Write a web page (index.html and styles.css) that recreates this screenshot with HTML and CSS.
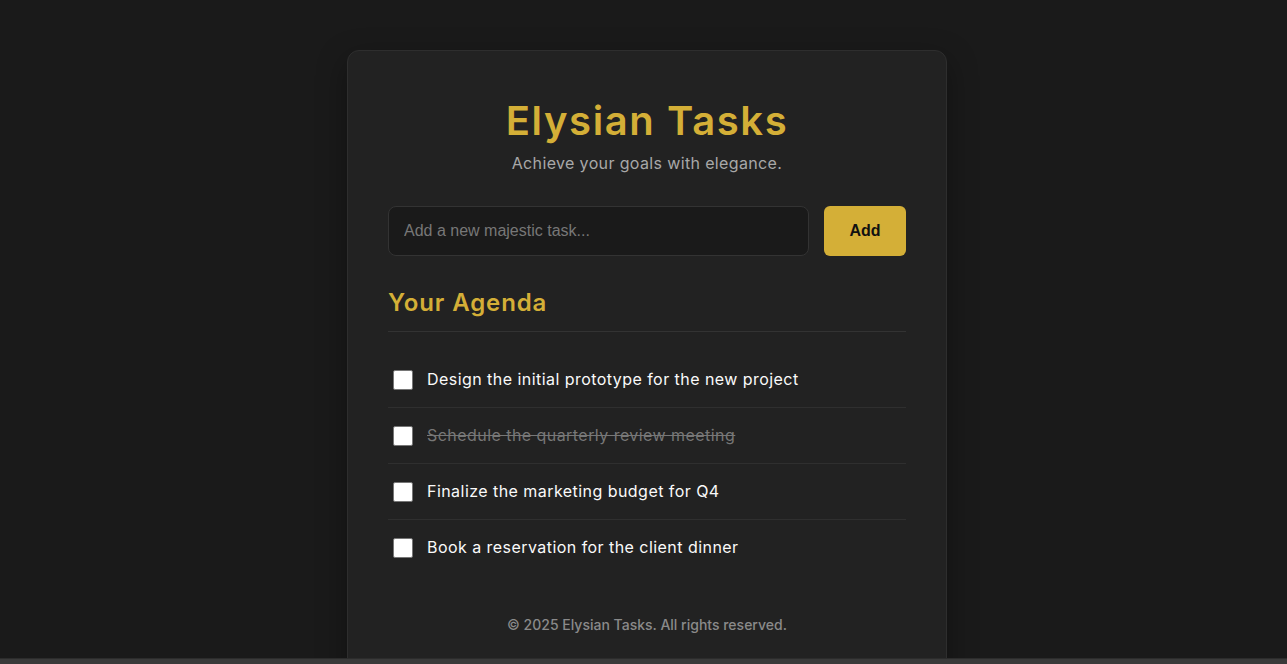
FILE: index.html
```html
<!DOCTYPE html>
<html lang="en">
<head>
<meta charset="utf-8">
<title>Elysian Tasks</title>
<link rel="stylesheet" href="styles.css">
</head>
<body>
<main class="card">
  <header class="header">
    <h1 class="title">Elysian Tasks</h1>
    <p class="subtitle">Achieve your goals with elegance.</p>
  </header>
  <form class="add-form">
    <input class="task-input" type="text" placeholder="Add a new majestic task...">
    <button class="add-btn" type="button">Add</button>
  </form>
  <h2 class="agenda">Your Agenda</h2>
  <ul class="tasks">
    <li class="task"><span class="check"></span><span class="task-text">Design the initial prototype for the new project</span></li>
    <li class="task done"><span class="check"></span><span class="task-text">Schedule the quarterly review meeting</span></li>
    <li class="task"><span class="check"></span><span class="task-text">Finalize the marketing budget for Q4</span></li>
    <li class="task"><span class="check"></span><span class="task-text">Book a reservation for the client dinner</span></li>
  </ul>
  <footer class="footer">© 2025 Elysian Tasks. All rights reserved.</footer>
</main>
<div class="scrollbar"></div>
</body>
</html>
```
FILE: styles.css
```css
* { box-sizing: border-box; }
html, body { margin: 0; padding: 0; }
body {
  background: #1a1a1a;
  font-family: Inter, "Noto Sans", sans-serif;
  color: #f0f0f0;
  padding: 50px 0 0 7px;
}
.card {
  width: 600px;
  margin: 0 auto;
  background: #222222;
  border: 1px solid #2e2e2e;
  border-radius: 12px;
  box-shadow: 0 10px 30px rgba(0,0,0,0.35);
  padding: 46px 40px 40px;
}
.header { text-align: center; margin-bottom: 31px; }
.title {
  margin: 0;
  font-size: 40px;
  line-height: 48px;
  font-weight: 600;
  color: #d4af37;
  letter-spacing: 1.6px;
}
.subtitle {
  margin: 6px 0 0;
  font-size: 16px;
  line-height: 24px;
  color: #a8a8a8;
  letter-spacing: 0.36px;
}
.add-form { display: flex; gap: 15px; margin: 0; }
.task-input {
  flex: 1;
  height: 50px;
  background: #1a1a1a;
  border: 1px solid #333;
  border-radius: 8px;
  padding: 0 15px;
  font-family: "Liberation Sans", Arial, sans-serif;
  font-size: 16px;
  color: #eee;
  outline: none;
}
.task-input::placeholder { color: #777; }
.add-btn {
  width: 82px;
  height: 50px;
  background: #d4af37;
  border: none;
  border-radius: 6px;
  font-family: "Liberation Sans", Arial, sans-serif;
  font-weight: 700;
  font-size: 16px;
  color: #111;
}
.agenda {
  margin: 32px 0 0;
  font-size: 24px;
  line-height: 30px;
  font-weight: 600;
  color: #d4af37;
  letter-spacing: 0.9px;
  padding-bottom: 13px;
  border-bottom: 1px solid #333;
}
.tasks { list-style: none; margin: 20px 0 0; padding: 0; }
.task {
  display: flex;
  align-items: center;
  padding: 15px 5px;
  line-height: 25px;
  font-size: 16px;
  letter-spacing: 0.45px;
  border-bottom: 1px solid #2f2f2f;
}
.task:last-child { border-bottom: none; }
.check {
  width: 20px;
  height: 20px;
  background: #fff;
  border: 1px solid #767676;
  border-radius: 2px;
  margin-right: 14px;
  flex: none;
}
.task-text { color: #fafafa; }
.done .task-text { color: #777; text-decoration: line-through; }
.footer {
  margin-top: 39px;
  text-align: center;
  font-size: 14px;
  line-height: 21px;
  font-weight: 500;
  color: #8a8a8a;
}
.scrollbar {
  position: fixed;
  left: 0;
  right: 0;
  bottom: 0;
  height: 6px;
  background: #3a3a3a;
  border-top: 1px solid #2c2c2c;
}
```
